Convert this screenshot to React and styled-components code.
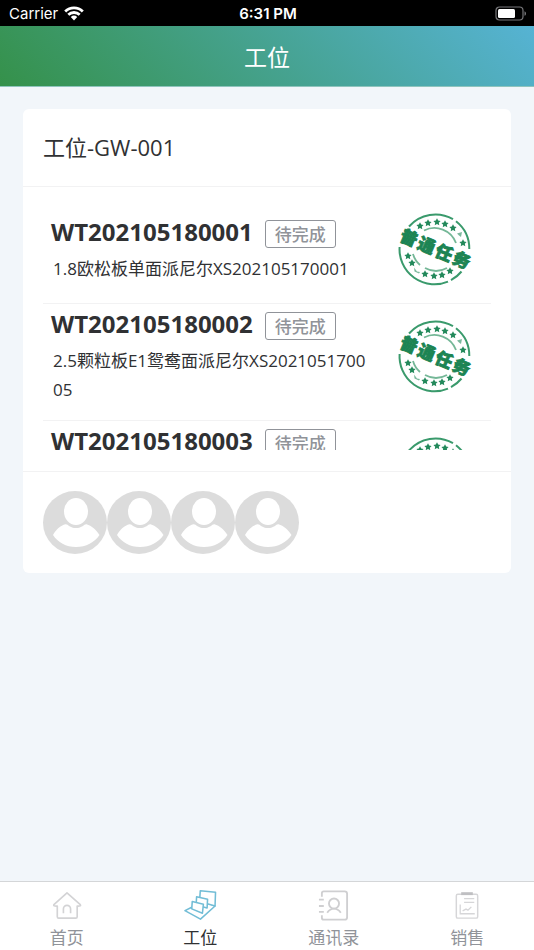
import styled, { createGlobalStyle } from "styled-components";

const GlobalStyle = createGlobalStyle`
  * {
    box-sizing: border-box;
  }
  body {
    margin: 0;
    background: #f2f6fa;
    font-family: "Open Sans", "Noto Sans CJK SC", sans-serif;
    color: #303133;
  }
`;

const Page = styled.div`
  min-height: 100vh;
  display: flex;
  flex-direction: column;
`;

const StatusBar = styled.div`
  height: 26px;
  padding: 1px 7px 0 9px;
  display: grid;
  grid-template-columns: 1fr auto 1fr;
  align-items: center;
  background: #000;
  color: #fff;
  font-family: Inter, sans-serif;
  font-size: 15px;
  line-height: 25px;
`;

const Carrier = styled.div`
  display: flex;
  align-items: center;
  gap: 6px;
`;

const Clock = styled.div`
  font-weight: 600;
`;

const Battery = styled.svg`
  justify-self: end;
`;

const Header = styled.header`
  height: 61px;
  padding-top: 2px;
  display: flex;
  align-items: center;
  justify-content: center;
  background: linear-gradient(45deg, #35914a, #56b3d4);
  border-bottom: 1px solid #8fc4bd;
`;

const Heading = styled.h1`
  margin: 0;
  font-size: 23px;
  font-weight: 400;
  line-height: 32px;
  color: #fff;
`;

const Main = styled.main`
  flex: 1;
  padding: 22px 23px;
`;

const Card = styled.section`
  background: #fff;
  border-radius: 6px;
`;

const CardTitle = styled.h2`
  margin: 0;
  padding: 22px 20px;
  border-bottom: 1px solid #f2f2f3;
  font-size: 22px;
  font-weight: 400;
  line-height: 33px;
`;

const CardBody = styled.div`
  padding: 21px 20px;
`;

const TaskList = styled.ul`
  margin: 0;
  padding: 0;
  height: 242px;
  overflow-y: auto;
  list-style: none;
  scrollbar-width: none;
`;

const TaskItem = styled.li`
  display: flex;
  align-items: center;
  border-bottom: 1px solid #f2f2f3;
`;

const TaskInfo = styled.div`
  flex: 1;
  padding: 0 14px 16px 8px;
`;

const TaskHead = styled.div`
  height: 42px;
  padding-bottom: 6px;
  display: flex;
  align-items: flex-end;
  gap: 12px;
`;

const TaskNo = styled.h3`
  margin: 0;
  font-size: 24px;
  font-weight: 700;
  line-height: 32px;
`;

const Tag = styled.span`
  padding: 1px 9px 0;
  border: 1px solid #909399;
  border-radius: 3px;
  font-size: 17px;
  font-weight: 500;
  line-height: 25px;
  color: #909399;
`;

const TaskDesc = styled.p`
  margin: 0;
  padding-left: 2px;
  font-size: 17px;
  line-height: 29px;
  word-break: break-all;
`;

const StampBox = styled.div`
  padding: 5px 20px 17px 12px;
  line-height: 0;
`;

const StampDrawing = styled.svg`
  overflow: visible;
`;

const StampText = styled.text`
  font-family: "Noto Sans CJK SC", sans-serif;
  font-size: 17px;
  font-weight: 900;
`;

const CardFooter = styled.footer`
  padding: 19px 20px;
  display: flex;
  border-top: 1px solid #f2f2f3;
`;

const TabBar = styled.nav`
  display: flex;
  border-top: 1px solid #d4d6d8;
  background: #fff;
`;

const Tab = styled.a`
  flex: 1;
  height: 68px;
  padding-top: 7px;
  display: flex;
  flex-direction: column;
  align-items: center;
  gap: 4px;
  font-size: 17px;
  line-height: 24px;
  text-decoration: none;
  color: ${({ $active }) => ($active ? "#303133" : "#909399")};
`;

const tasks = [
  { no: "WT202105180001", desc: "1.8欧松板单面派尼尔XS202105170001" },
  { no: "WT202105180002", desc: "2.5颗粒板E1鸳鸯面派尼尔XS202105170005" },
  { no: "WT202105180003", desc: "2.5颗粒板E1鸳鸯面派尼尔XS202105170006" },
];

const workers = [1, 2, 3, 4];

const STAR = "M0-3.7 1.2-1.4 3.6-1.1 1.8.7 2.3 3.2 0 2-2.3 3.2-1.8.7-3.6-1.1-1.2-1.4Z";
const stars = [
  [22, 13],
  [30, 10],
  [39, 9],
  [47, 11],
  [55, 15],
  [65, 30],
  [10, 43],
  [14, 50],
  [27, 61],
  [36, 63],
  [44, 62],
  [52, 58],
];

function WifiIcon() {
  return (
    <svg width="20" height="15" viewBox="0 0 20 15" fill="none" stroke="#fff" strokeWidth="2.8">
      <path d="M1.2 5.4a12.6 12.6 0 0 1 17.6 0" />
      <path d="M4.3 8.8a8.2 8.2 0 0 1 11.4 0" />
      <path d="M10 14.4 6.8 11.1a4.7 4.7 0 0 1 6.4 0Z" fill="#fff" stroke="none" />
    </svg>
  );
}

function BatteryIcon() {
  return (
    <Battery width="32" height="15" viewBox="0 0 32 15">
      <rect x="1" y="1" width="27" height="13" rx="3.5" fill="none" stroke="#77777a" strokeWidth="1.2" />
      <rect x="3" y="3" width="17" height="9" rx="1.5" fill="#fff" />
      <path d="M29.5 5.2c2 .8 2 3.8 0 4.6Z" fill="#77777a" />
    </Battery>
  );
}

function Stamp() {
  return (
    <StampDrawing width="73" height="73" viewBox="0 0 73 73" fill="none" stroke="#3a9a6c" role="img" aria-label="普通任务">
      <g strokeWidth="2">
        <path d="M11 13.5A35 35 0 0 1 55 6.2" />
        <path d="M58 8.2A35 35 0 0 1 71.3 36" />
        <path d="M1.6 34A35 35 0 0 0 50 68.6" />
        <path d="M53 67.2A35 35 0 0 0 63.5 58.5" />
      </g>
      <g strokeWidth="1.8" opacity="0.7">
        <path d="M26 17.5A23 23 0 0 1 58 30" />
        <path d="M15 41A23 23 0 0 0 22 52" />
        <path d="M27 55A23 23 0 0 0 49 55" />
      </g>
      <g fill="#23895b" stroke="none">
        {stars.map(([x, y]) => (
          <path key={`${x}-${y}`} d={STAR} transform={`translate(${x} ${y})`} />
        ))}
        <path d="M59 20.500 64 19l-1 5-2-1.500ZM16 54.500l3 4 3 .5-1 1.500-4.500-2Z" opacity="0.6" />
      </g>
      <g transform="rotate(23 36.5 36.5)" fill="#1c8453" stroke="#1c8453" strokeWidth="0.9">
        <StampText x="0 19 38 57" y="42">
          普通任务
        </StampText>
      </g>
    </StampDrawing>
  );
}

function Avatar() {
  return (
    <svg width="64" height="63" viewBox="0 0 64 63">
      <ellipse cx="32" cy="31.5" rx="32" ry="31.5" fill="#dcdcdc" />
      <ellipse cx="33" cy="20.5" rx="12" ry="13.5" fill="#fff" />
      <path d="M10 44c3-5.500 7.500-9.500 12.500-10.800 2.500-.4 4 3.800 10.500 3.800s8-4.200 10.500-3.800C48.500 34.500 53.500 39 56.500 44 51.500 51.500 43 56 33 56S15 51.500 10 44Z" fill="#fff" />
    </svg>
  );
}

function HomeIcon() {
  return (
    <svg width="34" height="34" viewBox="0 0 34 34" fill="none" stroke="#d3d3d5" strokeWidth="1.7" strokeLinejoin="round">
      <path d="M17 4 3.500 16.200c-.5 1 .4 1.600 3.500 1.400V28.500c0 1 .5 1.500 1.500 1.500H26c1 0 1.500-.5 1.500-1.500V17.600c3 .2 4-.4 3.200-1.400Z" />
      <path d="M13.300 25v-4.500a3.700 3.700 0 0 1 7.400 0V25" />
    </svg>
  );
}

function StationIcon() {
  return (
    <svg width="34" height="34" viewBox="0 0 34 34" fill="#fff" stroke="#72bdd6" strokeWidth="1.6" strokeLinejoin="round">
      <path d="M8 19 1.500 22.300 17.500 31 32.500 17.500 24 14Z" />
      <path d="M17.300 1.800 33 3.300 32.500 17.500 16.500 13Z" />
      <path d="M13.500 8 24.800 10.500 24.300 19.500 13 16.500Z" />
      <path d="M9 13 20.500 15.800 19.500 25 8.500 20.500Z" />
    </svg>
  );
}

function ContactsIcon() {
  return (
    <svg width="34" height="34" viewBox="0 0 34 34" fill="none" stroke="#cfcfd1" strokeWidth="1.9">
      <path d="M4.500 8V4.500c0-1.200.8-2 2-2H28c1.600 0 2.500.9 2.500 2.500v24c0 1.600-.9 2.500-2.500 2.500H6.500c-1.200 0-2-.8-2-2V27" />
      <path d="M1.500 11h5M1.500 17.500h5M1.500 23.500h5" />
      <circle cx="17" cy="15" r="5.200" />
      <path d="M10 24.500c2-3 4-4.300 7-4.300s5 1.300 7 4.300" />
    </svg>
  );
}

function SalesIcon() {
  return (
    <svg width="34" height="34" viewBox="0 0 34 34" fill="none" stroke="#d6d6d8" strokeWidth="1.5">
      <rect x="6" y="5.500" width="22" height="24.500" rx="1.5" />
      <path d="M11 4.800h12" stroke="#bfbfc2" strokeWidth="3" />
      <path d="M14 9.800h10.500M14 13.800h10.500M10 16v9.500h15" strokeWidth="1.3" />
      <path d="m12.500 22.500 3.500-1.800 2 1.200 3.500-3.500" strokeWidth="1.4" />
    </svg>
  );
}

const tabs = [
  { label: "首页", Icon: HomeIcon },
  { label: "工位", Icon: StationIcon, active: true },
  { label: "通讯录", Icon: ContactsIcon },
  { label: "销售", Icon: SalesIcon },
];

function App() {
  return (
    <Page>
      <GlobalStyle />
      <StatusBar>
        <Carrier>
          Carrier
          <WifiIcon />
        </Carrier>
        <Clock>6:31 PM</Clock>
        <BatteryIcon />
      </StatusBar>
      <Header>
        <Heading>工位</Heading>
      </Header>
      <Main>
        <Card>
          <CardTitle>工位-GW-001</CardTitle>
          <CardBody>
            <TaskList>
              {tasks.map(({ no, desc }) => (
                <TaskItem key={no}>
                  <TaskInfo>
                    <TaskHead>
                      <TaskNo>{no}</TaskNo>
                      <Tag>待完成</Tag>
                    </TaskHead>
                    <TaskDesc>{desc}</TaskDesc>
                  </TaskInfo>
                  <StampBox>
                    <Stamp />
                  </StampBox>
                </TaskItem>
              ))}
            </TaskList>
          </CardBody>
          <CardFooter>
            {workers.map((id) => (
              <Avatar key={id} />
            ))}
          </CardFooter>
        </Card>
      </Main>
      <TabBar>
        {tabs.map(({ label, Icon, active }) => (
          <Tab key={label} href="#" $active={active}>
            <Icon />
            {label}
          </Tab>
        ))}
      </TabBar>
    </Page>
  );
}

export default App;
